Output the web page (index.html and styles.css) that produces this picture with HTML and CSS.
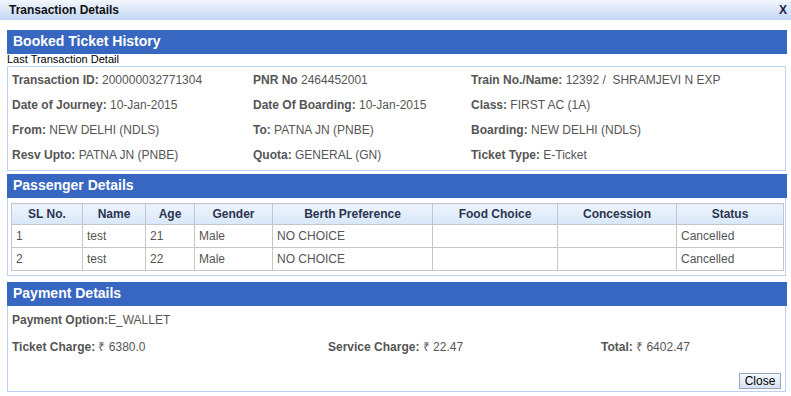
FILE: index.html
```html
<!DOCTYPE html>
<html lang="en">
<head>
    <meta charset="UTF-8">
    <title>Transaction Details</title>
    <link rel="stylesheet" href="styles.css">
</head>
<body>
    <div class="dialog">
        <div class="title-bar">
            <span class="title">Transaction Details</span>
            <span class="close-x">X</span>
        </div>

        <div class="dialog-body">
            <div class="section">
                <div class="section-head">Booked Ticket History</div>
                <div class="sub-label">Last Transaction Detail</div>
                <div class="section-box info-grid">
                    <div class="cell"><b>Transaction ID:</b> 200000032771304</div>
                    <div class="cell"><b>PNR No</b> 2464452001</div>
                    <div class="cell"><b>Train No./Name:</b> 12392 /&nbsp; SHRAMJEVI N EXP</div>
                    <div class="cell"><b>Date of Journey:</b> 10-Jan-2015</div>
                    <div class="cell"><b>Date Of Boarding:</b> 10-Jan-2015</div>
                    <div class="cell"><b>Class:</b> FIRST AC (1A)</div>
                    <div class="cell"><b>From:</b> NEW DELHI (NDLS)</div>
                    <div class="cell"><b>To:</b> PATNA JN (PNBE)</div>
                    <div class="cell"><b>Boarding:</b> NEW DELHI (NDLS)</div>
                    <div class="cell"><b>Resv Upto:</b> PATNA JN (PNBE)</div>
                    <div class="cell"><b>Quota:</b> GENERAL (GN)</div>
                    <div class="cell"><b>Ticket Type:</b> E-Ticket</div>
                </div>
            </div>

            <div class="section section-passenger">
                <div class="section-head">Passenger Details</div>
                <div class="section-box table-box">
                    <table class="pax-table">
                        <thead>
                            <tr>
                                <th class="c-sl">SL No.</th>
                                <th class="c-name">Name</th>
                                <th class="c-age">Age</th>
                                <th class="c-gender">Gender</th>
                                <th class="c-berth">Berth Preference</th>
                                <th class="c-food">Food Choice</th>
                                <th class="c-conc">Concession</th>
                                <th>Status</th>
                            </tr>
                        </thead>
                        <tbody>
                            <tr>
                                <td>1</td>
                                <td>test</td>
                                <td>21</td>
                                <td>Male</td>
                                <td>NO CHOICE</td>
                                <td></td>
                                <td></td>
                                <td>Cancelled</td>
                            </tr>
                            <tr>
                                <td>2</td>
                                <td>test</td>
                                <td>22</td>
                                <td>Male</td>
                                <td>NO CHOICE</td>
                                <td></td>
                                <td></td>
                                <td>Cancelled</td>
                            </tr>
                        </tbody>
                    </table>
                </div>
            </div>

            <div class="section section-payment">
                <div class="section-head">Payment Details</div>
                <div class="section-box pay-box">
                    <div class="pay-option"><b>Payment Option:</b>E_WALLET</div>
                    <div class="pay-row">
                        <div class="cell"><b>Ticket Charge:</b> &#8377; 6380.0</div>
                        <div class="cell"><b>Service Charge:</b> &#8377; 22.47</div>
                        <div class="cell"><b>Total:</b> &#8377; 6402.47</div>
                    </div>
                    <div class="pay-actions">
                        <button class="btn-close">Close</button>
                    </div>
                </div>
            </div>
        </div>
    </div>
</body>
</html>
```

FILE: styles.css
```css
* {
    margin: 0;
    padding: 0;
    box-sizing: border-box;
}

body {
    font-family: 'Liberation Sans', Arial, sans-serif;
    font-size: 12px;
    color: #555;
    background-color: #fff;
    width: 791px;
    height: 396px;
    overflow: hidden;
}

.title-bar {
    height: 20px;
    background: linear-gradient(to bottom, #f3f7fe, #c2d6f4);
    display: flex;
    justify-content: space-between;
    align-items: center;
    padding: 0 4px 0 9px;
}

.title {
    font-weight: bold;
    color: #111;
}

.close-x {
    font-weight: bold;
    color: #1b1f4a;
    font-size: 12px;
}

.dialog-body {
    padding: 10px 4px 0 7px;
}

.section-head {
    height: 24px;
    line-height: 23px;
    background-color: #3867c1;
    color: #fff;
    font-weight: bold;
    font-size: 14px;
    padding-left: 6px;
}

.sub-label {
    height: 12px;
    line-height: 11px;
    font-size: 11px;
    color: #000;
}

.section-box {
    border: 1px solid #bdd3f1;
    border-top: none;
    margin-right: 1px;
}

.info-grid {
    border-top: 1px solid #bdd3f1;
    display: grid;
    grid-template-columns: 241px 218px 1fr;
    padding: 1px 4px 2px;
}

.cell {
    line-height: 25px;
    white-space: nowrap;
}

b {
    font-weight: bold;
}

.section-passenger {
    margin-top: 3px;
}

.table-box {
    padding: 5px 3px 4px 3px;
}

.pax-table {
    width: 773px;
    border-collapse: collapse;
    table-layout: fixed;
}

.pax-table th,
.pax-table td {
    border: 1px solid #c6c6c6;
    text-align: left;
    padding: 0 4px;
}

.pax-table th {
    height: 21px;
    text-align: center;
    font-weight: bold;
    color: #2b3550;
    background: linear-gradient(to bottom, #eef4fd, #d8e7fa);
}

.pax-table td {
    height: 23px;
    color: #555;
}

.c-sl { width: 71px; }
.c-name { width: 63px; }
.c-age { width: 49px; }
.c-gender { width: 78px; }
.c-berth { width: 160px; }
.c-food { width: 125px; }
.c-conc { width: 119px; }

.section-payment {
    margin-top: 6px;
}

.pay-box {
    padding: 3px 4px 2px;
}

.pay-option {
    line-height: 22px;
}

.pay-row {
    display: grid;
    grid-template-columns: 316px 273px 1fr;
    margin-top: 4px;
}

.pay-actions {
    display: flex;
    justify-content: flex-end;
    margin-top: 13px;
}

.btn-close {
    font-family: 'Liberation Sans', Arial, sans-serif;
    font-size: 12px;
    color: #000;
    width: 42px;
    height: 16px;
    border: 1px solid #9aa6b8;
    background: linear-gradient(to bottom, #f6f9fe, #d6e2f3);
    cursor: pointer;
}
```
